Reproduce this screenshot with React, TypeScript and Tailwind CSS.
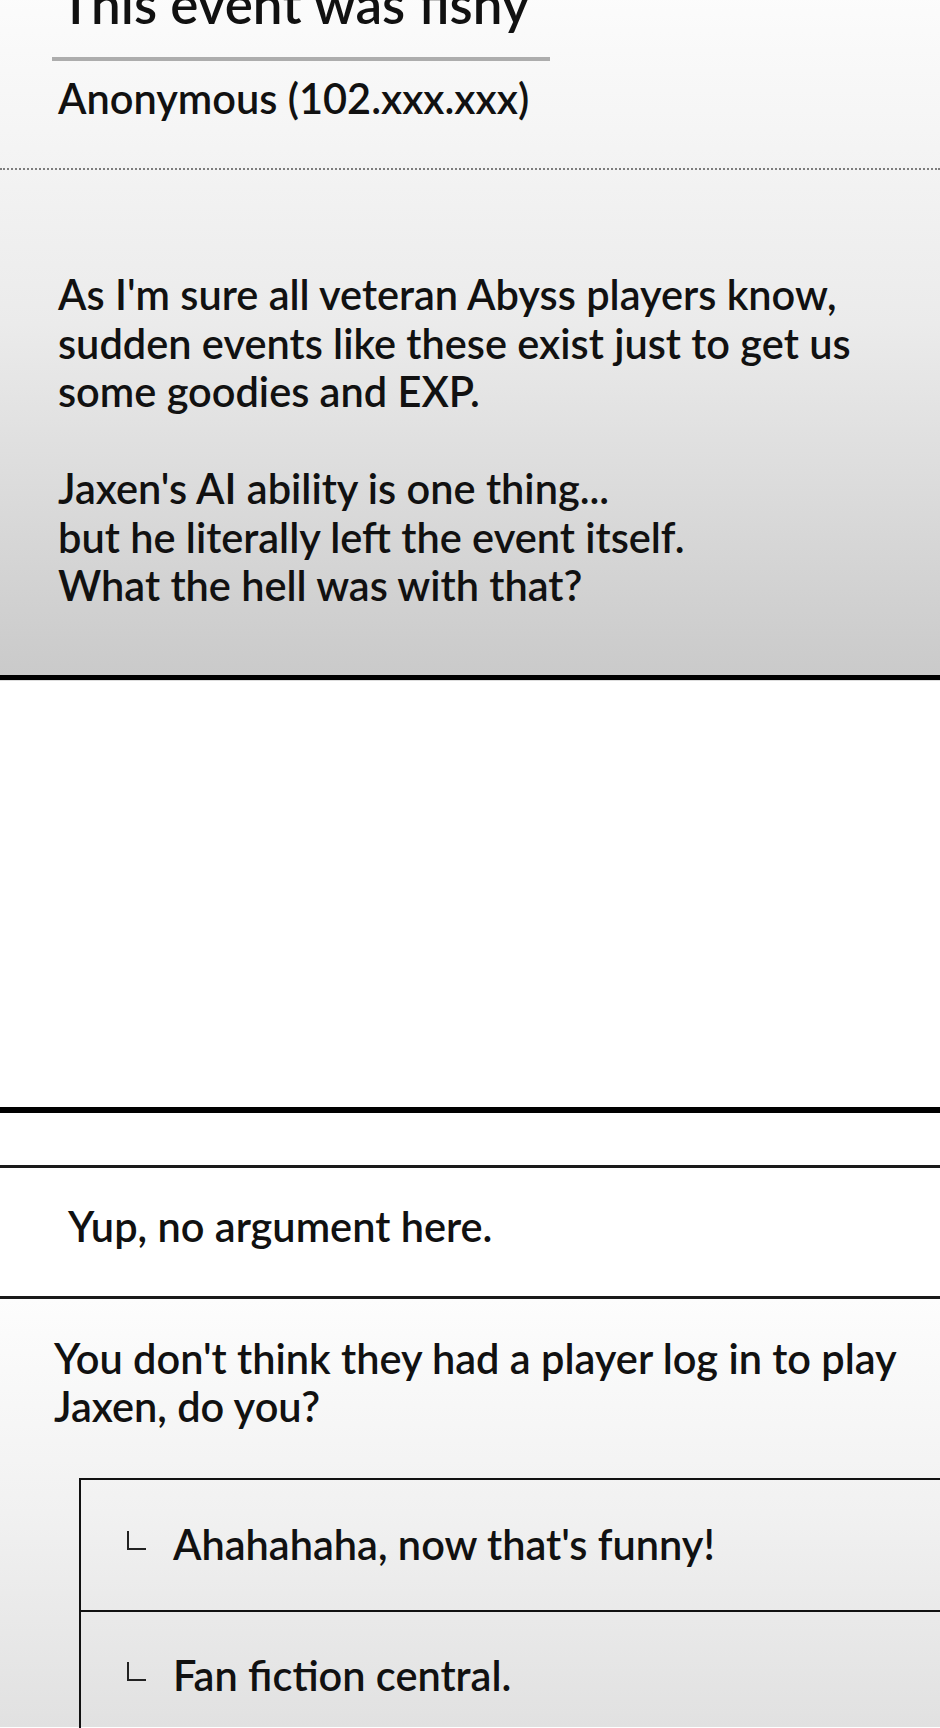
import { useMemo } from "react";

type Reply = { id: number; text: string };

const replies: Reply[] = [
    { id: 1, text: "Ahahahaha, now that's funny!" },
    { id: 2, text: "Fan fiction central." },
];

// small corner mark used before nested replies
function ReplyMark() {
    return <span className="inline-block shrink-0 w-[19px] h-[19px] border-l-2 border-b-2 border-[#222] mr-[27px] translate-y-[-4px]" />;
}

function PostHeader() {
    return (
        <div>
            <h1 className="mt-[-26px] pl-[60px] text-[53px] leading-[60px] font-semibold text-[#111] whitespace-nowrap">This event was fishy</h1>
            <div className="ml-[52px] mt-[23px] w-[498px] h-[4px] bg-[#adadad]" />
            <p className="mt-[13px] pl-[58px] text-[41.5px] leading-[48px] font-semibold text-[#111] whitespace-nowrap">Anonymous (102.xxx.xxx)</p>
            <div className="mt-[46px] border-t-2 border-dotted border-[#7d7d7d]" />
        </div>
    );
}

export default function App() {
    const lines = useMemo(
        () => [
            "As I'm sure all veteran Abyss players know,",
            "sudden events like these exist just to get us",
            "some goodies and EXP.",
        ],
        []
    );

    return (
        <div className="w-[940px] h-[1728px] overflow-hidden bg-white" style={{ fontFamily: "Lato, 'Open Sans', sans-serif" }}>
            {/* Post body with grey fade */}
            <div className="bg-gradient-to-b from-[#fdfdfd] via-[#ebebeb] to-[#cacaca]">
                <PostHeader />
                <div className="pt-[100px] pb-[65px] pl-[58px] text-[41.5px] leading-[48.5px] font-semibold text-[#111] whitespace-nowrap">
                    {lines.map((l) => (
                        <div key={l}>{l}</div>
                    ))}
                    <div className="h-[48.5px]" />
                    <div>Jaxen's AI ability is one thing...</div>
                    <div>but he literally left the event itself.</div>
                    <div>What the hell was with that?</div>
                </div>
            </div>
            <div className="h-[6px] bg-black border-b border-[#ddd]" />

            {/* Blank space */}
            <div className="h-[426px] bg-white" />
            <div className="h-[6px] bg-black" />
            <div className="h-[52px] bg-white" />

            {/* Comments */}
            <div className="border-t-[3px] border-b-[3px] border-[#1a1a1a] h-[134px] flex items-center pl-[68px] text-[41.5px] font-semibold text-[#111]">
                <span className="mt-[-10px]">Yup, no argument here.</span>
            </div>
            <div className="bg-gradient-to-b from-[#fdfdfd] via-[#f1f1f1] to-[#e1e1e1] h-[428px]">
                <p className="pt-[35px] pl-[54px] text-[41.5px] leading-[48px] font-semibold text-[#111] whitespace-nowrap">
                    You don't think they had a player log in to play
                    <br />
                    Jaxen, do you?
                </p>
                <div className="ml-[79px] mt-[48px] border-t-2 border-l-2 border-[#111]">
                    {replies.map((r, i) => (
                        <div
                            key={r.id}
                            className={`h-[130px] flex items-center pl-[46px] text-[41.5px] font-semibold text-[#111] ${i > 0 ? "border-t-2 border-[#111]" : ""}`}
                        >
                            <ReplyMark />
                            <span>{r.text}</span>
                        </div>
                    ))}
                </div>
            </div>
        </div>
    );
}
